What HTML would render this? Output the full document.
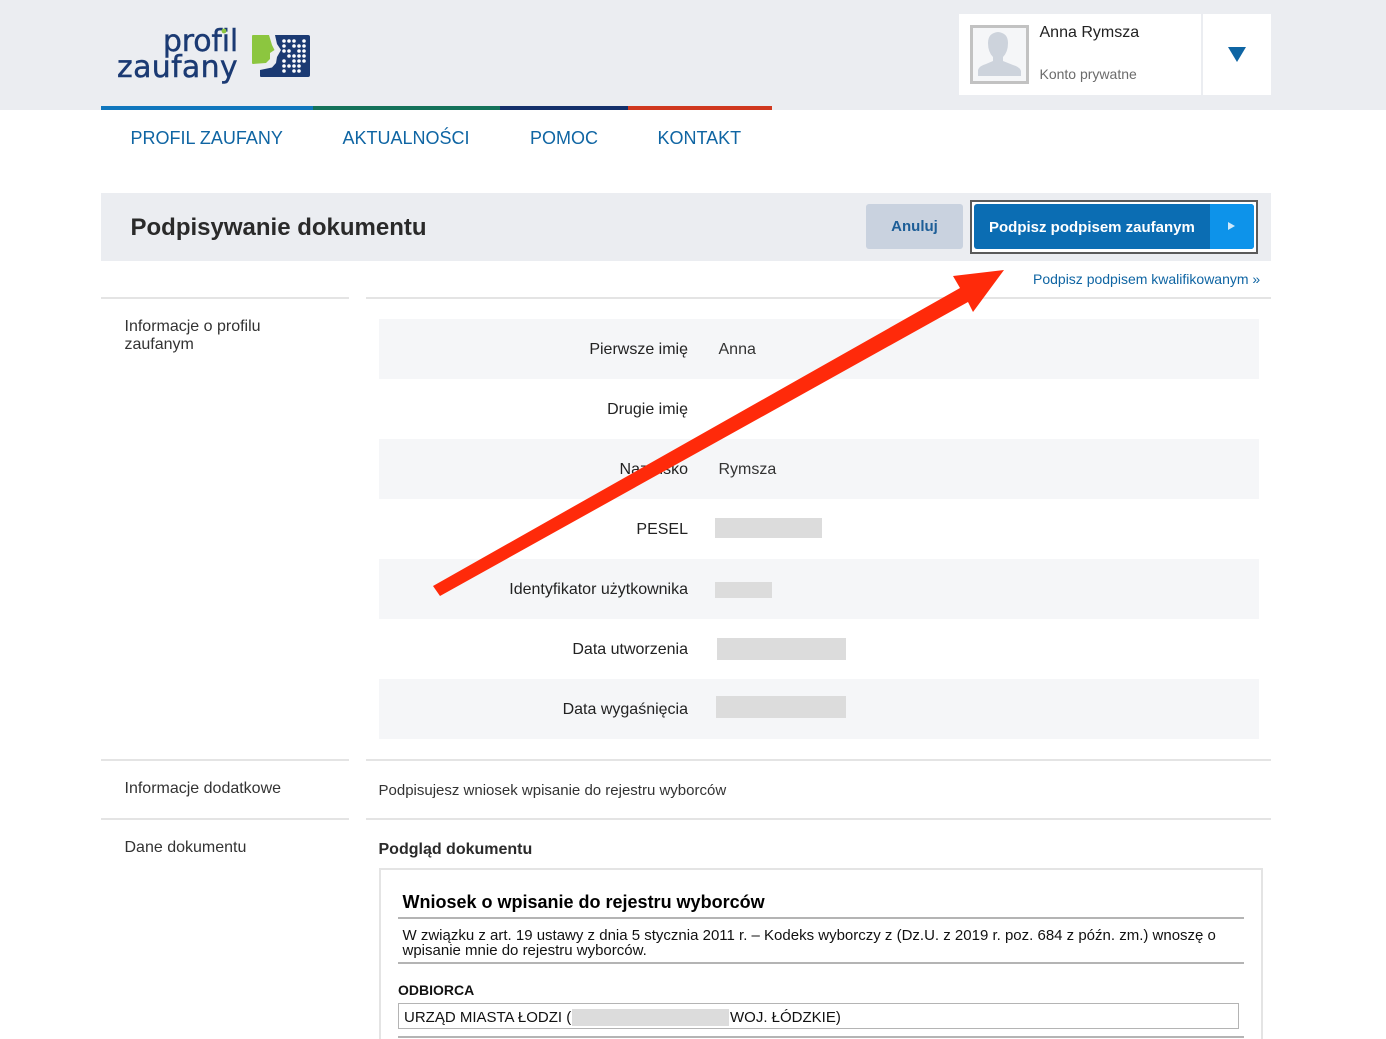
<!DOCTYPE html>
<html lang="pl"><head><meta charset="utf-8"><title>Podpisywanie dokumentu</title>
<style>
html,body{margin:0;padding:0;background:#fff;width:1386px;height:1039px;overflow:hidden}
body{position:relative;font-family:"Liberation Sans",Arial,sans-serif;color:#222}
.a{position:absolute}
.t{position:absolute;white-space:nowrap;line-height:20px}
.l{position:absolute;white-space:nowrap;line-height:20px;font-size:16px;text-align:right;right:698px;color:#222}
.v{position:absolute;white-space:nowrap;line-height:20px;font-size:16px;left:718.500px;color:#333}
.row{position:absolute;left:379px;width:880px;height:60px;background:#f5f6f8}
.g{position:absolute;background:#dcdcdc}
.hr{position:absolute;height:2px;background:#e4e4e4}
.nav{position:absolute;top:128px;line-height:20px;font-size:18px;color:#0f65a3;white-space:nowrap}
.dr{position:absolute;height:2px;background:#b4b4b4;left:398px;width:846px}
.logo{position:absolute;white-space:nowrap;text-align:right;font-family:'DejaVu Sans',sans-serif;font-size:30px;line-height:32px;color:#1b3a73;-webkit-text-stroke:.4px #1b3a73}
</style></head><body>
<div class="a" style="left:0;top:0;width:1386px;height:110px;background:#ebedf1"></div>

<div class="logo" style="left:158px;top:26px;width:80px;letter-spacing:-.2px">profil</div>
<div class="logo" style="left:114px;top:52px;width:124px;letter-spacing:.3px">zaufany</div>
<svg class="a" style="left:220px;top:27px" width="8" height="8"><circle cx="4" cy="4" r="2.400" fill="#8cc63f"/></svg>
<svg class="a" style="left:250px;top:33px" width="62" height="47" viewBox="250 33 62 47">
<path d="M253 35H269L272 45L274.500 50L270 53V59L266 63L253 64Q252 64 252 63V36Q252 35 253 35Z" fill="#8cc63f"/>
<path d="M275 35H308Q310 35 310 37V75Q310 77 308 77H261Q260 77 260 76V70L272 67.500L276 63L277 57L281 50L277 44Z" fill="#1b3a73"/>
<g fill="#fff">
<circle cx="284" cy="41" r="1.800"/><circle cx="289" cy="41" r="1.800"/><circle cx="294" cy="41" r="1.800"/><circle cx="304" cy="41" r="1.800"/>
<circle cx="294" cy="46" r="1.800"/><circle cx="299" cy="46" r="1.800"/><circle cx="304" cy="46" r="1.800"/><circle cx="284" cy="46" r="1.800"/>
<circle cx="284" cy="51" r="1.800"/><circle cx="289" cy="51" r="1.800"/><circle cx="299" cy="51" r="1.800"/><circle cx="304" cy="51" r="1.800"/>
<circle cx="289" cy="56" r="1.800"/><circle cx="294" cy="56" r="1.800"/><circle cx="299" cy="56" r="1.800"/><circle cx="304" cy="56" r="1.800"/>
<circle cx="284" cy="61" r="1.800"/><circle cx="294" cy="61" r="1.800"/><circle cx="299" cy="61" r="1.800"/><circle cx="304" cy="61" r="1.800"/>
<circle cx="284" cy="66" r="1.800"/><circle cx="289" cy="66" r="1.800"/><circle cx="294" cy="66" r="1.800"/><circle cx="299" cy="66" r="1.800"/>
<circle cx="284" cy="71" r="1.800"/><circle cx="294" cy="71" r="1.800"/><circle cx="299" cy="71" r="1.800"/>
</g></svg>

<div class="a" style="left:959px;top:14px;width:242px;height:81px;background:#fff"></div>
<div class="a" style="left:1203px;top:14px;width:68px;height:81px;background:#fff"></div>
<div class="a" style="left:970px;top:25px;width:53px;height:53px;border:3px solid #c2c2c2;background:#f5f6f8"></div>
<svg class="a" style="left:973px;top:28px" width="53" height="53" viewBox="0 0 53 53">
<path d="M5 48V42Q6 38 13 36L20 33V29Q15 24 15 15Q15 5 25 4Q35 5 35 15Q35 24 30 29V33L40 37Q47 39 48 43V48Z" fill="#cdd3dc"/></svg>
<div class="t" style="left:1039.500px;top:23px;font-size:16px;color:#222">Anna Rymsza</div>
<div class="t" style="left:1039.500px;top:64px;font-size:14px;color:#6b6b6b">Konto prywatne</div>
<svg class="a" style="left:1227px;top:46px" width="20" height="17"><path d="M1 1H19L10 16Z" fill="#0f65a3"/></svg>

<div class="a" style="left:101px;top:106px;width:212px;height:4px;background:#0f76bd"></div>
<div class="a" style="left:313px;top:106px;width:187px;height:4px;background:#14725a"></div>
<div class="a" style="left:500px;top:106px;width:128px;height:4px;background:#14306b"></div>
<div class="a" style="left:628px;top:106px;width:144px;height:4px;background:#d0381f"></div>

<div class="nav" style="left:130.500px">PROFIL ZAUFANY</div>
<div class="nav" style="left:342.500px">AKTUALNOŚCI</div>
<div class="nav" style="left:530px">POMOC</div>
<div class="nav" style="left:657.500px">KONTAKT</div>

<div class="a" style="left:101px;top:193px;width:1170px;height:68px;background:#ebedf1"></div>
<div class="t" style="left:130.500px;top:213px;font-size:24px;line-height:30px;font-weight:bold;color:#2a2a2a">Podpisywanie dokumentu</div>
<div class="a" style="left:866px;top:204px;width:97px;height:45px;background:#c9d2df;border-radius:3px;text-align:center;font-size:15px;font-weight:bold;line-height:45px;color:#1d5e97"><span style="position:relative;top:0">Anuluj</span></div>
<div class="a" style="left:970px;top:200px;width:284px;height:50px;border:2px solid #5a5a5a;background:#fff"></div>
<div class="a" style="left:974px;top:204px;width:280px;height:45px;background:#0b6db3;border-radius:3px;overflow:hidden">
<div class="a" style="left:236px;top:0;width:44px;height:45px;background:#0d93ea"></div>
<svg class="a" style="left:253px;top:17px" width="9" height="10"><path d="M1 1L8 5L1 9Z" fill="#cfe9fb"/></svg>
<div class="t" style="left:15px;top:14px;font-size:15px;font-weight:bold;color:#fff">Podpisz podpisem zaufanym</div>
</div>
<div class="t" style="left:1033px;top:269px;font-size:14px;color:#0f65a3">Podpisz podpisem kwalifikowanym »</div>

<div class="hr" style="left:101px;top:297px;width:248px"></div>
<div class="hr" style="left:366px;top:297px;width:905px"></div>
<div class="t" style="left:124.500px;top:318px;font-size:16px;line-height:18px;color:#333">Informacje o profilu<br>zaufanym</div>

<div class="row" style="top:319px"></div>
<div class="row" style="top:439px"></div>
<div class="row" style="top:559px"></div>
<div class="row" style="top:679px"></div>
<div class="l" style="top:340px">Pierwsze imię</div><div class="v" style="top:340px">Anna</div>
<div class="l" style="top:400px">Drugie imię</div>
<div class="l" style="top:460px">Nazwisko</div><div class="v" style="top:460px">Rymsza</div>
<div class="l" style="top:520px">PESEL</div>
<div class="g" style="left:715px;top:518px;width:107px;height:20px"></div>
<div class="l" style="top:580px">Identyfikator użytkownika</div>
<div class="g" style="left:715px;top:582px;width:57px;height:16px"></div>
<div class="l" style="top:640px">Data utworzenia</div>
<div class="g" style="left:717px;top:638px;width:129px;height:22px"></div>
<div class="l" style="top:700px">Data wygaśnięcia</div>
<div class="g" style="left:716px;top:696px;width:130px;height:22px"></div>

<div class="hr" style="left:101px;top:759px;width:248px"></div>
<div class="hr" style="left:366px;top:759px;width:905px"></div>
<div class="t" style="left:124.500px;top:779px;font-size:16px;color:#333">Informacje dodatkowe</div>
<div class="t" style="left:378.500px;top:781px;font-size:15px;color:#333">Podpisujesz wniosek wpisanie do rejestru wyborców</div>
<div class="hr" style="left:101px;top:818px;width:248px"></div>
<div class="hr" style="left:366px;top:818px;width:905px"></div>
<div class="t" style="left:124.500px;top:838px;font-size:16px;color:#333">Dane dokumentu</div>
<div class="t" style="left:378.500px;top:840px;font-size:16px;font-weight:bold;color:#2a2a2a">Podgląd dokumentu</div>

<div class="a" style="left:379px;top:868px;width:880px;height:180px;border:2px solid #e4e4e4;background:#fff"></div>
<div class="t" style="left:402.500px;top:892px;font-size:18px;font-weight:bold;color:#000">Wniosek o wpisanie do rejestru wyborców</div>
<div class="dr" style="top:917px"></div>
<div class="t" style="left:402.500px;top:928px;font-size:15px;line-height:15px;color:#111">W związku z art. 19 ustawy z dnia 5 stycznia 2011 r. – Kodeks wyborczy z (Dz.U. z 2019 r. poz. 684 z późn. zm.) wnoszę o<br>wpisanie mnie do rejestru wyborców.</div>
<div class="dr" style="top:962px"></div>
<div class="t" style="left:398px;top:980px;font-size:14px;font-weight:bold;color:#111">ODBIORCA</div>
<div class="a" style="left:398px;top:1003px;width:839px;height:24px;border:1px solid #b4b4b4"></div>
<div class="t" style="left:404px;top:1008px;font-size:15px;color:#111">URZĄD MIASTA ŁODZI (</div>
<div class="g" style="left:572px;top:1009px;width:157px;height:17px"></div>
<div class="t" style="left:730px;top:1008px;font-size:15px;color:#111">WOJ. ŁÓDZKIE)</div>
<div class="dr" style="top:1036px"></div>

<svg class="a" style="left:0;top:0" width="1386" height="1039" viewBox="0 0 1386 1039">
<path d="M433 586L960 288L953 276L1004 270L973 312L968 302L440 596Z" fill="#ff2a0a"/>
</svg>
</body></html>
